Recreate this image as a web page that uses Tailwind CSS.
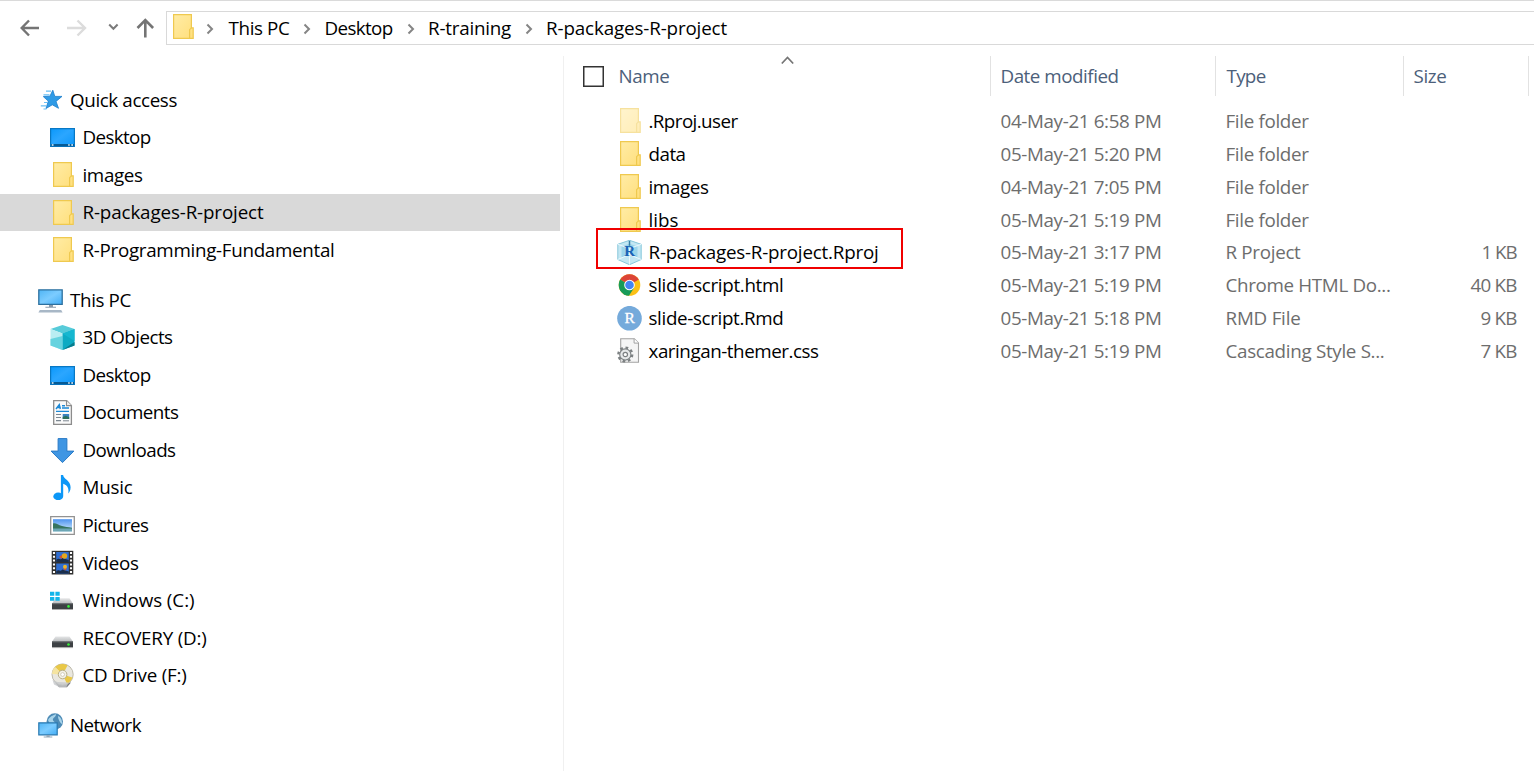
<!DOCTYPE html>
<html lang="en">
<head>
<meta charset="utf-8">
<title>R-packages-R-project</title>
<script src="https://cdn.jsdelivr.net/npm/@tailwindcss/browser@4"></script>
</head>
<body class="bg-white">
<svg class="absolute h-0 w-0">
  <defs>
    <linearGradient id="gf" x1="0" y1="0" x2="1" y2="1"><stop offset="0" stop-color="#ffeca6"/><stop offset="1" stop-color="#ffdf7c"/></linearGradient>
    <linearGradient id="gb" x1="0" y1="0" x2="1" y2="1"><stop offset="0" stop-color="#0a98fb"/><stop offset=".45" stop-color="#2ba6ff"/><stop offset="1" stop-color="#0c97fa"/></linearGradient>
    <linearGradient id="gm" x1="0" y1="0" x2="1" y2="1"><stop offset="0" stop-color="#4fb5f5"/><stop offset=".5" stop-color="#7cccff"/><stop offset="1" stop-color="#43adf5"/></linearGradient>
    <linearGradient id="gd" x1="0" y1="0" x2="0" y2="1"><stop offset="0" stop-color="#e6e7e8"/><stop offset="1" stop-color="#b9bbbd"/></linearGradient>
    <linearGradient id="gs" x1="0" y1="0" x2="0" y2="1"><stop offset="0" stop-color="#4d93ee"/><stop offset="1" stop-color="#d8efff"/></linearGradient>
    <symbol id="folder" viewBox="0 0 25 25"><path d="M3.6.6h17.800v13.200h1.800v10.600H3.600z" fill="url(#gf)" stroke="#efc94f" stroke-width="1.2"/><path d="M19.600 24.400v-8.700l1.800-1.900" fill="none" stroke="#efc94f" stroke-width="1.2"/></symbol>
    <symbol id="star" viewBox="0 0 25 25"><path d="M14.800 3.200l2 6.200 7.200 0-6 5 2.500 6.900-6.200-3.500-6.300 3.700 2.300-7.400-5-4.500 6.600-.4z" fill="#2f9be6" stroke="#1b7ccb" stroke-width=".8"/><path d="M8 4.200h5M5.500 7.800h6M2.800 18.900h5.700M6 15.500h4M5.500 22h3" stroke="#66bdf4" stroke-width="1.2"/></symbol>
    <symbol id="desktop" viewBox="0 0 25 25"><path d="M.6 3.7h23.800v17.700H.6z" fill="url(#gb)" stroke="#0878c4" stroke-width="1.2"/><path d="M1 19h23v2.200H1z" fill="#075a94"/><path d="M1.800 19.300h1.700v1.400H1.800zM18.200 19.300h1.500v1.400h-1.500zM21.300 19.300h1.700v1.400h-1.700z" fill="#e8f7ff"/></symbol>
    <symbol id="pc" viewBox="0 0 25 25"><path d="M.8 1.800h23.400v14.600H.8z" fill="url(#gm)" stroke="#2d709e" stroke-width="1.3"/><path d="M11 17h4v1.700h3v1H7.400v-1H11z" fill="#8a9aaa"/><path d="M1.800 22h21.400l1.400 2.400H.4z" fill="#a8b7c6"/></symbol>
    <symbol id="cube" viewBox="0 0 25 25"><path d="M12.500 0l12 4-12 4.500L.5 4z" fill="#57cbd9"/><path d="M.5 4L12.500 8.400V25L.5 20.400z" fill="#b9edf2"/><path d="M.5 14l12-3v14L.5 20.400z" fill="#66d3df"/><path d="M12.500 8.400l12-4.400v16.400l-12 4.600z" fill="#0dabc3"/><path d="M12.500 8.400l12-4.400v12z" fill="#16b7d0"/><path d="M12.500 25l12-8v3.400z" fill="#087c8d"/></symbol>
    <symbol id="doc" viewBox="0 0 25 25"><path d="M3.700.7h13l4.700 4.700v18.900H3.700z" fill="#fafafa" stroke="#8c8c8c" stroke-width="1.3"/><path d="M16.500.7v4.900h5" fill="#eee" stroke="#8c8c8c" stroke-width="1.1"/><path d="M6 9l3.300-4.300 1 4.300M7.700 7.500h3.100M12 5.700h3M12 8h7M6 11.400h13" fill="none" stroke="#1a88d6" stroke-width="1.4"/><path d="M6 14.500h5M6 17.500h5M6 20.600h5" stroke="#7c8791" stroke-width="1.2"/><path d="M12.700 14h6.500v5h-6.500z" fill="#3c83c0"/><path d="M12.700 17l3-1.200 3.500 1.400V19h-6.500z" fill="#2d715c"/><path d="M13 20.800h6" stroke="#7c8791"/></symbol>
    <symbol id="down" viewBox="0 0 25 25"><path d="M8.100.6h8.800v12.500h7L12.500 24.600 1.100 13.100h7z" fill="#3f96e3" stroke="#2a7bc6" stroke-width="1"/></symbol>
    <symbol id="music" viewBox="0 0 25 25"><ellipse cx="8.200" cy="21.400" rx="4.900" ry="3.800" fill="#0c97f7"/><path d="M10.900 0h2.200c.4 4.200 7.500 5.400 7.500 12.200 0 3.300-1.200 4.900-2.300 6.300.8-4.700-.5-8.200-5.100-9.700v12.500h-2.300z" fill="#0c97f7"/></symbol>
    <symbol id="pic" viewBox="0 0 25 25"><path d="M.7 3.700h23.600v17.600H.7z" fill="#fff" stroke="#929292" stroke-width="1.3"/><path d="M3 6.200h19v12.400H3z" fill="url(#gs)"/><path d="M3 10.500c3-.8 5 1.700 9 2.600 3 1 6 .8 10 1.600v1.500H3z" fill="#36745f"/><path d="M3 15.500h19v3H3z" fill="#6ca6b4"/></symbol>
    <symbol id="video" viewBox="0 0 25 25"><path d="M1.700.8h21.600v23.700H1.700z" fill="#303030"/><path d="M6.200 2h12.600v10H6.200zM6.200 13.500h12.600v10H6.200z" fill="#2f6ed2"/><path d="M6.200 10c3-3 4 1 6-2l6.600 2v2H6.200zM6.200 21.500c3-3 4 1 6-2l6.600 2v2H6.200z" fill="#1a2e4c"/><circle cx="14.500" cy="6" r="2.700" fill="#e3a71d"/><path d="M9 7l3-2v4zM13 17.500l4 1-2 2.200z" fill="#d8522b"/><circle cx="15" cy="16.800" r="2" fill="#e9b52d"/><path d="M4 2v22M21 2v22" stroke="#fff" stroke-width="2.100" stroke-dasharray="2 1.800"/></symbol>
    <symbol id="drive" viewBox="0 0 25 25"><path d="M5.500 11.400h14l3.400 5.200H2.100z" fill="url(#gd)"/><path d="M2 16.300h21v6H2z" fill="#3d4144"/><path d="M2 16.300h21v1H2z" fill="#73777a"/><path d="M2 22.200h21v.9H2z" fill="#a7a7a7"/><circle cx="18.500" cy="19.500" r="1.300" fill="#39f03b"/></symbol>
    <symbol id="drivew" viewBox="0 0 25 25"><path d="M5.500 10.300h14l3.400 5.200H2.100z" fill="url(#gd)"/><path d="M2 15.200h21v6H2z" fill="#3d4144"/><path d="M2 15.200h21v1H2z" fill="#73777a"/><path d="M2 21.100h21v.9H2z" fill="#a7a7a7"/><circle cx="18.500" cy="18.400" r="1.300" fill="#39f03b"/><path d="M0 3.800h4.300v3.900H0zM5.400 3.800h4.300v3.900H5.400zM0 8.900h4.300v3.900H0zM5.400 8.900h4.300v3.900H5.400z" fill="#12b5ea"/></symbol>
    <symbol id="cd" viewBox="0 0 25 25"><path d="M5 19.500h16l-4 4.800H9z" fill="#77797b"/><circle cx="12.600" cy="11.500" r="10.600" fill="#e9e7df" stroke="#bdb9aa"/><path d="M12.600 11.500L5 4c4-3.700 9-3.700 12.500-1.500zM12.600 11.500l9.800 3c-1 3.200-3 5-5.500 6.300z" fill="#e9c847"/><path d="M12.600 11.500L2 11c.2-2.800 1-5 3-7z" fill="#f5e4a0"/><circle cx="12.600" cy="11.500" r="4.300" fill="#f3f1e8" stroke="#b7ae87"/><circle cx="12.600" cy="11.500" r="1.900" fill="#fff" stroke="#c3bca3" stroke-width=".7"/><path d="M2.500 17l5 2 11 .5-2 4.500H9l-5-2.500z" fill="#c6c8ca" opacity=".8"/></symbol>
    <symbol id="net" viewBox="0 0 25 25"><circle cx="16.800" cy="8.500" r="8.200" fill="#4d8bb6"/><path d="M10 7c3-5 6-4.500 8-6 0 3-2 3-3 5s3 3 2 5-6 0-7-4zM20 3c3 1 4.500 5 4 8-2-1-4-5-4-8z" fill="#a7d3e9"/><path d="M.8 9.800h18.400v12H.8z" fill="url(#gm)" stroke="#2878b0" stroke-width="1.2"/><path d="M8.500 22h3.200v1.500h2.600v1H5.700v-1h2.800z" fill="#94a7b7"/></symbol>
    <symbol id="rproj" viewBox="0 0 25 25"><path d="M12.500.3l11.700 4v15.200l-11.700 5.200L.8 19.500V4.300z" fill="#c3e7f3" stroke="#86c7da" stroke-width="1"/><path d="M4.500 6.500l8-2.700 8 2.700v11l-8-2.500-8 2.500z" fill="#9bd5eb"/><path d="M.8 4.300l11.700 4.200 11.700-4.200M12.500 8.500v16M.8 19.500l11.700-5 11.700 5" fill="none" stroke="#e9f8fc" stroke-width="1"/><text x="12.600" y="16" text-anchor="middle" font-family="Liberation Serif,serif" font-weight="700" font-size="15" fill="#1963b6">R</text><path d="M12.500.8v5" stroke="#377ea4" stroke-width="1.500"/></symbol>
    <symbol id="chrome" viewBox="0 0 25 25"><circle cx="12.500" cy="12" r="10.800" fill="#fbc116"/><path d="M12.500 12L3.150 6.600a10.800 10.800 0 0 1 18.700 0z" fill="#dc4437"/><path d="M3.150 6.600a10.800 10.800 0 0 0 8.800 16.200l5.200-8.100-4.650-2.700z" fill="#179b59"/><circle cx="12.500" cy="12" r="5.300" fill="#fff"/><circle cx="12.500" cy="12" r="4.300" fill="#4285f4"/></symbol>
    <symbol id="rmd" viewBox="0 0 25 25"><circle cx="12.500" cy="12.200" r="12.300" fill="#75aadb"/><text x="12.700" y="17.200" text-anchor="middle" font-family="Liberation Serif,serif" font-size="15.500" fill="#fff" stroke="#fff" stroke-width=".3">R</text></symbol>
    <symbol id="css" viewBox="0 0 25 25"><path d="M3.700.7h13.600l4.200 4.200v19.400H3.700z" fill="#f5f5f5" stroke="#a2a2a2" stroke-width="1.1"/><path d="M17.100.7v4.400h4.400" fill="#fff" stroke="#a2a2a2"/><circle cx="8.300" cy="16.500" r="6.900" fill="none" stroke="#7c8082" stroke-width="2.400" stroke-dasharray="2.700 2.720"/><circle cx="8.300" cy="16.500" r="5.600" fill="#e6e8e9" stroke="#7c8082" stroke-width="1.1"/><circle cx="8.300" cy="16.500" r="2.200" fill="#fff" stroke="#7c8082" stroke-width="1.2"/></symbol>
    <symbol id="sep" viewBox="0 0 8 12"><path d="M1.500 1.500L6 6 1.500 10.500" fill="none" stroke="#858585" stroke-width="2"/></symbol>
  </defs>
</svg>

<div class="flex h-[771px] w-[1534px] flex-col overflow-hidden bg-white font-['Open_Sans','Noto_Sans',sans-serif] text-[18.8px] leading-6 whitespace-nowrap text-black">
  <header class="flex h-[46px] shrink-0 border-t-[1.5px] border-[#dadada] pt-[10px]">
    <nav class="flex w-[166px] shrink-0 items-start pt-[7px] pl-[20px]">
      <svg class="h-[20px] w-[20px]" viewBox="0 0 20 20" fill="none" stroke="#747474" stroke-width="2.4"><path d="M19 10H2M9 2.500L1.700 10 9 17.500"/></svg>
      <svg class="ml-[27px] h-[20px] w-[20px]" viewBox="0 0 20 20" fill="none" stroke="#dcdcdc" stroke-width="2.4"><path d="M0 10h17.500M10.500 2.500L18 10l-7.500 7.500"/></svg>
      <svg class="mt-[4px] ml-[21px] h-[10px] w-[11px]" viewBox="0 0 11 10" fill="none" stroke="#7b7b7b" stroke-width="2"><path d="M1.200 2.500l4.200 4.300 4.200-4.300"/></svg>
      <svg class="ml-[16px] h-[20px] w-[20px]" viewBox="0 0 20 20" fill="none" stroke="#747474" stroke-width="2.6"><path d="M10.300 19.500V2.500M2.500 10l7.800-7.800 7.800 7.800"/></svg>
    </nav>
    <div class="flex h-[34px] flex-1 items-center border border-r-0 border-[#d9d9d9] pl-[3px] [&>span]:-mt-px">
      <svg class="mb-[3px] h-[25px] w-[25px]"><use href="#folder"/></svg>
      <svg class="mt-[1px] ml-[11px] h-[12px] w-[8px]"><use href="#sep"/></svg>
      <span class="ml-[14.5px]" data-w="60">This PC</span>
      <svg class="mt-[1px] ml-[13px] h-[12px] w-[8px]"><use href="#sep"/></svg>
      <span class="ml-[14px]" data-w="67">Desktop</span>
      <svg class="mt-[1px] ml-[14px] h-[12px] w-[8px]"><use href="#sep"/></svg>
      <span class="ml-[13.5px]" data-w="82">R-training</span>
      <svg class="mt-[1px] ml-[14px] h-[12px] w-[8px]"><use href="#sep"/></svg>
      <span class="ml-[13px]" data-w="180">R-packages-R-project</span>
    </div>
  </header>

  <div class="flex min-h-0 flex-1">
    <aside class="w-[560px] shrink-0 pt-[35px] [&_span]:-mt-[.5px] [&_svg]:h-[25px] [&_svg]:w-[25px] [&>div]:flex [&>div]:h-[37.55px] [&>div]:items-center [&>div]:gap-[7.5px]">
      <div class="pl-[37.5px]"><svg><use href="#star"/></svg><span data-w="106">Quick access</span></div>
      <div class="pl-[50px]"><svg><use href="#desktop"/></svg><span data-w="67">Desktop</span></div>
      <div class="pl-[50px]"><svg><use href="#folder"/></svg><span data-w="59">images</span></div>
      <div class="bg-[#d9d9d9] pl-[50px]"><svg><use href="#folder"/></svg><span data-w="180">R-packages-R-project</span></div>
      <div class="pl-[50px]"><svg><use href="#folder"/></svg><span data-w="251">R-Programming-Fundamental</span></div>
      <div class="mt-[12.5px] pl-[37.5px]"><svg><use href="#pc"/></svg><span data-w="60">This PC</span></div>
      <div class="pl-[50px]"><svg><use href="#cube"/></svg><span data-w="89">3D Objects</span></div>
      <div class="pl-[50px]"><svg><use href="#desktop"/></svg><span data-w="67">Desktop</span></div>
      <div class="pl-[50px]"><svg><use href="#doc"/></svg><span data-w="95">Documents</span></div>
      <div class="pl-[50px]"><svg><use href="#down"/></svg><span data-w="92">Downloads</span></div>
      <div class="pl-[50px]"><svg><use href="#music"/></svg><span data-w="49">Music</span></div>
      <div class="pl-[50px]"><svg><use href="#pic"/></svg><span data-w="65">Pictures</span></div>
      <div class="pl-[50px]"><svg><use href="#video"/></svg><span data-w="55">Videos</span></div>
      <div class="pl-[50px]"><svg><use href="#drivew"/></svg><span data-w="111">Windows (C:)</span></div>
      <div class="pl-[50px]"><svg><use href="#drive"/></svg><span data-w="123">RECOVERY (D:)</span></div>
      <div class="pl-[50px]"><svg><use href="#cd"/></svg><span data-w="103">CD Drive (F:)</span></div>
      <div class="mt-[12.5px] pl-[37.5px]"><svg><use href="#net"/></svg><span data-w="70">Network</span></div>
    </aside>

    <main class="mt-[10px] ml-[3px] flex-1 border-l border-[#f0f0f0]">
      <div class="flex h-[40px] text-[#4c607a] [&>div]:flex [&>div]:items-center [&>div]:border-r-[1.5px] [&>div]:border-[#e2e2e2]">
        <div class="relative w-[427px] pl-[19px]">
          <span class="h-[21px] w-[21px] border-[1.5px] border-[#333] shadow-[inset_0_0_0_.5px_#333]"></span>
          <span class="ml-[14.5px]" data-w="50">Name</span>
          <svg class="absolute top-0 left-[217px] h-[9px] w-[13px]" viewBox="0 0 13 9" fill="none" stroke="#757575" stroke-width="1.7"><path d="M.8 7.500l5.700-6 5.700 6"/></svg>
        </div>
        <div class="w-[225px] pl-[9.5px]"><span data-w="117">Date modified</span></div>
        <div class="w-[188px] pl-[10.5px]"><span data-w="38">Type</span></div>
        <div class="w-[125px] pl-[9.5px]"><span data-w="32">Size</span></div>
      </div>

      <div class="relative mt-[9.5px] text-[#6d6d6d] [&_b]:-mt-[2px] [&_i]:-mt-[2px] [&_svg]:-mt-[2px] [&_svg]:h-[25px] [&_svg]:w-[25px] [&>section]:grid [&>section]:h-[32.86px] [&>section]:grid-cols-[25px_358.5px_225px_214px_77px] [&>section]:items-center [&>section]:pl-[53px]">
        <section><svg class="opacity-55"><use href="#folder"/></svg><b class="pl-[6.5px] font-normal text-black"><span data-w="88">.Rproj.user</span></b><i class="not-italic"><span data-w="160">04-May-21 6:58 PM</span></i><i class="not-italic"><span data-w="82">File folder</span></i></section>
        <section><svg><use href="#folder"/></svg><b class="pl-[6.5px] font-normal text-black"><span data-w="36">data</span></b><i class="not-italic"><span data-w="160">05-May-21 5:20 PM</span></i><i class="not-italic"><span data-w="82">File folder</span></i></section>
        <section><svg><use href="#folder"/></svg><b class="pl-[6.5px] font-normal text-black"><span data-w="59">images</span></b><i class="not-italic"><span data-w="160">04-May-21 7:05 PM</span></i><i class="not-italic"><span data-w="82">File folder</span></i></section>
        <section><svg><use href="#folder"/></svg><b class="pl-[6.5px] font-normal text-black"><span data-w="29">libs</span></b><i class="not-italic"><span data-w="160">05-May-21 5:19 PM</span></i><i class="not-italic"><span data-w="82">File folder</span></i></section>
        <section><svg><use href="#rproj"/></svg><b class="pl-[6.5px] font-normal text-black"><span data-w="229">R-packages-R-project.Rproj</span></b><i class="not-italic"><span data-w="160">05-May-21 3:17 PM</span></i><i class="not-italic"><span data-w="74">R Project</span></i><i class="text-right not-italic"><span data-w="34">1 KB</span></i></section>
        <section><svg><use href="#chrome"/></svg><b class="pl-[6.5px] font-normal text-black"><span data-w="134">slide-script.html</span></b><i class="not-italic"><span data-w="160">05-May-21 5:19 PM</span></i><i class="not-italic"><span data-w="164">Chrome HTML Do...</span></i><i class="text-right not-italic"><span data-w="45">40 KB</span></i></section>
        <section><svg><use href="#rmd"/></svg><b class="pl-[6.5px] font-normal text-black"><span data-w="134">slide-script.Rmd</span></b><i class="not-italic"><span data-w="160">05-May-21 5:18 PM</span></i><i class="not-italic"><span data-w="74">RMD File</span></i><i class="text-right not-italic"><span data-w="35">9 KB</span></i></section>
        <section><svg><use href="#css"/></svg><b class="pl-[6.5px] font-normal text-black"><span data-w="169">xaringan-themer.css</span></b><i class="not-italic"><span data-w="160">05-May-21 5:19 PM</span></i><i class="not-italic"><span data-w="158">Cascading Style S...</span></i><i class="text-right not-italic"><span data-w="35">7 KB</span></i></section>
        <div class="absolute top-[122.5px] left-[32px] h-[41px] w-[307px] border-2 border-[#f00000]"></div>
      </div>
    </main>
  </div>
</div>
<script>
  // Set the tracking of each label so it fills its nominal width.
  var ctx = document.createElement('canvas').getContext('2d');
  ctx.font = '18.8px "Open Sans"';
  document.querySelectorAll('[data-w]').forEach(function (el) {
    var natural = ctx.measureText(el.textContent).width;
    el.style.display = 'inline-block';
    el.style.letterSpacing = ((+el.dataset.w + 1 - natural) / el.textContent.length) + 'px';
  });
</script>
</body>
</html>
